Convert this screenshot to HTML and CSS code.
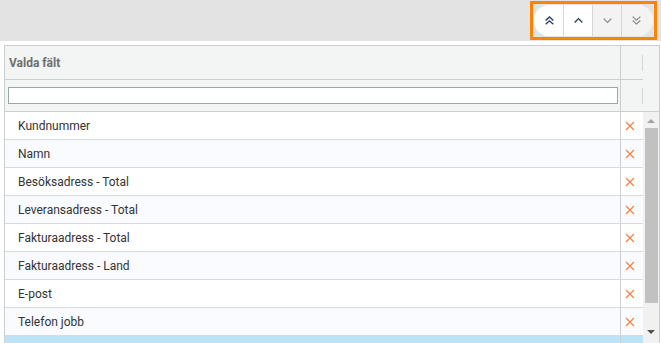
FILE: index.html
```html
<!DOCTYPE html>
<html>
<head>
<meta charset="utf-8">
<link rel="stylesheet" href="styles.css">
</head>
<body>
<div class="toolbar">
  <div class="focus">
    <div class="pill">
      <button class="pbtn active"><svg width="11" height="11" viewBox="0 0 10 10"><path d="M1.5 5 L5 1.8 L8.5 5 M1.5 8.5 L5 5.3 L8.5 8.5" fill="none" stroke="#2a3a5a" stroke-width="1.2"/></svg></button>
      <button class="pbtn active"><svg width="11" height="11" viewBox="0 0 10 10"><path d="M1.5 6.8 L5 3.3 L8.5 6.8" fill="none" stroke="#2a3a5a" stroke-width="1.2"/></svg></button>
      <button class="pbtn off"><svg width="11" height="11" viewBox="0 0 10 10"><path d="M1.5 3.3 L5 6.8 L8.5 3.3" fill="none" stroke="#8a8a8a" stroke-width="1.1"/></svg></button>
      <button class="pbtn off last"><svg width="11" height="11" viewBox="0 0 10 10"><path d="M1.5 1.5 L5 4.7 L8.5 1.5 M1.5 5 L5 8.2 L8.5 5" fill="none" stroke="#8a8a8a" stroke-width="1.1"/></svg></button>
    </div>
  </div>
</div>
<div class="grid">
  <div class="head">
    <div class="hmain">Valda fält</div>
    <div class="hact"><span class="hdiv"></span></div>
  </div>
  <div class="filter">
    <div class="fmain"><input class="finput" type="text"></div>
    <div class="hact"><span class="hdiv"></span></div>
  </div>
  <div class="body">
    <div class="rows">
      <div class="row"><div class="cell">Kundnummer</div><div class="act"><svg class="x" viewBox="0 0 10 10"><path d="M1 1 L9 9 M9 1 L1 9"/></svg></div></div>
      <div class="row alt"><div class="cell">Namn</div><div class="act"><svg class="x" viewBox="0 0 10 10"><path d="M1 1 L9 9 M9 1 L1 9"/></svg></div></div>
      <div class="row"><div class="cell">Besöksadress - Total</div><div class="act"><svg class="x" viewBox="0 0 10 10"><path d="M1 1 L9 9 M9 1 L1 9"/></svg></div></div>
      <div class="row alt"><div class="cell">Leveransadress - Total</div><div class="act"><svg class="x" viewBox="0 0 10 10"><path d="M1 1 L9 9 M9 1 L1 9"/></svg></div></div>
      <div class="row"><div class="cell">Fakturaadress - Total</div><div class="act"><svg class="x" viewBox="0 0 10 10"><path d="M1 1 L9 9 M9 1 L1 9"/></svg></div></div>
      <div class="row alt"><div class="cell">Fakturaadress - Land</div><div class="act"><svg class="x" viewBox="0 0 10 10"><path d="M1 1 L9 9 M9 1 L1 9"/></svg></div></div>
      <div class="row"><div class="cell">E-post</div><div class="act"><svg class="x" viewBox="0 0 10 10"><path d="M1 1 L9 9 M9 1 L1 9"/></svg></div></div>
      <div class="row alt"><div class="cell">Telefon jobb</div><div class="act"><svg class="x" viewBox="0 0 10 10"><path d="M1 1 L9 9 M9 1 L1 9"/></svg></div></div>
      <div class="row sel"><div class="cell"></div><div class="act"></div></div>
    </div>
    <div class="sbar">
      <div class="arrow up"></div>
      <div class="thumb"></div>
      <div class="arrow down"></div>
    </div>
  </div>
</div>
</body>
</html>
```
FILE: styles.css
```css
* { box-sizing: border-box; }
html, body { margin: 0; padding: 0; height: 343px; overflow: hidden; background: #fff; }
body { font-family: Roboto, "Liberation Sans", sans-serif; font-size: 12px; color: #333; }

.toolbar {
  height: 41px;
  background: #e3e3e3;
  display: flex;
  justify-content: flex-end;
  align-items: flex-start;
  padding: 1px 4px 0 0;
}
.focus {
  border: 3px solid #ff8200;
  padding: 1px;
  height: 39px;
  width: 127px;
}
.pill {
  display: flex;
  height: 31px;
  background: #fff;
  border-radius: 16px;
  overflow: hidden;
}
.pbtn {
  border: 0;
  margin: 0;
  padding: 0;
  height: 31px;
  width: 29px;
  display: flex;
  align-items: center;
  justify-content: center;
  border-right: 1px solid #d6d6d6;
}
.pbtn.active { background: #fff; }
.pbtn:first-child { width: 30px; padding-left: 2px; }
.pbtn.off { background: #f3f3f3; }
.pbtn.last { border-right: 0; width: 31px; padding-right: 2px; }

.grid {
  margin: 4px 1px 0 4px;
  border: 1px solid #cacece;
  border-bottom: 0;
  height: 298px;
  display: flex;
  flex-direction: column;
  overflow: hidden;
}
.head {
  display: flex;
  height: 34px;
  background: #f3f4f4;
}
.hmain {
  flex: 1;
  display: flex;
  align-items: center;
  padding-left: 4px;
  font-weight: 700;
  color: #6e6e6e;
  font-size: 12px;
  border-bottom: 1px solid #cacece;
  border-right: 1px solid #cacece;
}
.hact {
  width: 38px;
  display: flex;
  align-items: center;
  padding-left: 21px;
  position: relative;
}
.hact::after {
  content: "";
  position: absolute;
  left: 0;
  width: 22px;
  bottom: 0;
  border-bottom: 1px solid #cacece;
}
.hdiv { width: 1px; height: 16px; background: #d4d6d6; }
.filter {
  display: flex;
  height: 32px;
  background: #f3f4f4;
}
.fmain {
  flex: 1;
  display: flex;
  align-items: center;
  padding: 0 2px 0 3px;
  border-bottom: 1px solid #cacece;
  border-right: 1px solid #cacece;
}
.finput {
  width: 100%;
  height: 17px;
  border: 1px solid #9aa8a4;
  background: #fff;
  margin: 0;
  padding: 0;
  outline: none;
}
.filter .hact::after { display: none; }
.filter .hact { border-bottom: 1px solid #cacece; }

.body { flex: 1; display: flex; min-height: 0; }
.rows { flex: 1; display: flex; flex-direction: column; }
.row {
  height: 28px;
  flex: none;
  display: flex;
  background: #fff;
  border-bottom: 1px solid #d8dbdb;
}
.row.alt { background: #f9fbfe; }
.row.sel { background: #bde3f7; border-bottom: 0; }
.cell {
  flex: 1;
  display: flex;
  align-items: center;
  padding-left: 13px;
  color: #333;
  border-right: 1px solid #cacece;
}
.act {
  width: 22px;
  display: flex;
  align-items: center;
  justify-content: center;
  padding-right: 4px;
}
.x { width: 10px; height: 10px; fill: none; stroke: #f3864d; stroke-width: 1.4; }
.sbar {
  width: 16px;
  background: #f1f1f1;
  display: flex;
  flex-direction: column;
  align-items: center;
}
.arrow { width: 0; height: 0; border-left: 4px solid transparent; border-right: 4px solid transparent; }
.arrow.up { border-bottom: 4px solid #a3a3a3; margin-top: 7px; }
.arrow.down { border-top: 4px solid #505050; margin-top: 27px; }
.thumb { width: 13px; height: 175px; background: #c1c1c1; margin-top: 5px; }
```
